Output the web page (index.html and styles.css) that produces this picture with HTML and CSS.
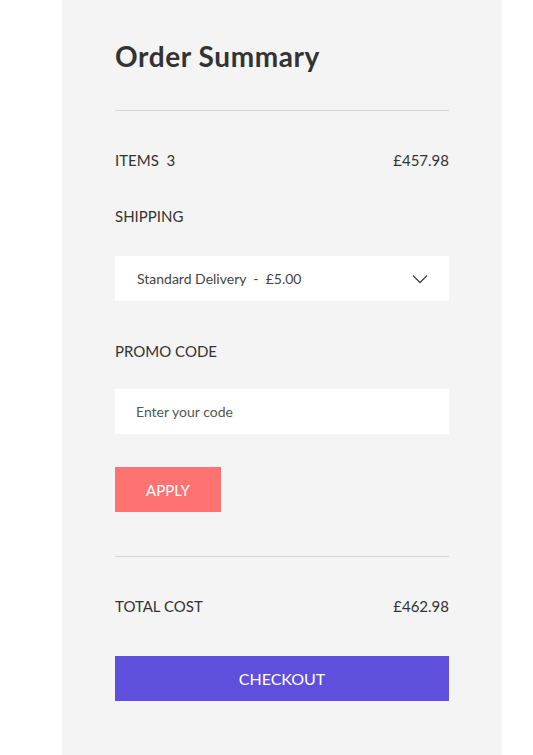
FILE: index.html
```html
<!DOCTYPE html>
<html>
<head>
<meta charset="utf-8">
<link rel="stylesheet" href="styles.css">
</head>
<body>
<div class="panel">
  <h1 class="title">Order Summary</h1>
  <div class="rule rule-top"></div>
  <div class="row items">
    <span>ITEMS&nbsp; 3</span>
    <span>£457.98</span>
  </div>
  <div class="label shipping">SHIPPING</div>
  <div class="select">
    <span>Standard Delivery&nbsp; -&nbsp; £5.00</span>
    <svg class="chev" width="16" height="10" viewBox="0 0 16 10"><path d="M1 1.5 L8 8.5 L15 1.5" fill="none" stroke="#444" stroke-width="1.3"/></svg>
  </div>
  <div class="label promo">PROMO CODE</div>
  <div class="input">Enter your code</div>
  <div class="apply">APPLY</div>
  <div class="rule rule-bottom"></div>
  <div class="row total">
    <span>TOTAL COST</span>
    <span>£462.98</span>
  </div>
  <div class="checkout">CHECKOUT</div>
</div>
</body>
</html>
```

FILE: styles.css
```css
html, body {
  margin: 0;
  padding: 0;
  background: #ffffff;
}
body {
  font-family: "Lato", "Open Sans", sans-serif;
  color: #333333;
}
.panel {
  margin-left: 62px;
  width: 440px;
  min-height: 755px;
  box-sizing: border-box;
  padding: 39px 53px 0 53px;
  background: #f4f4f4;
  display: flex;
  flex-direction: column;
}
.title {
  margin: 0;
  font-size: 28px;
  line-height: 34px;
  font-weight: 700;
  color: #333;
  letter-spacing: 0.6px;
}
.rule {
  height: 1px;
  background: #d6d6d6;
}
.rule-top { margin-top: 37px; }
.row {
  display: flex;
  justify-content: space-between;
  font-size: 15px;
  line-height: 20px;
  color: #333;
}
.items { margin-top: 39px; }
.label {
  font-size: 15px;
  line-height: 20px;
  color: #333;
}
.shipping { margin-top: 36px; }
.select {
  margin-top: 30px;
  height: 45px;
  background: #fff;
  display: flex;
  align-items: center;
  justify-content: space-between;
  padding: 0 21px 0 22px;
  font-size: 14px;
  color: #444;
}
.promo { margin-top: 40px; }
.input {
  margin-top: 28px;
  height: 45px;
  background: #fff;
  display: flex;
  align-items: center;
  padding: 0 21px;
  font-size: 14px;
  color: #555;
}
.apply {
  margin-top: 33px;
  width: 106px;
  height: 45px;
  background: #ff7272;
  color: #fff;
  font-size: 15px;
  display: flex;
  align-items: center;
  justify-content: center;
}
.rule-bottom { margin-top: 44px; }
.total { margin-top: 39px; }
.checkout {
  margin-top: 40px;
  height: 45px;
  background: #5e50dc;
  color: #fff;
  font-size: 16px;
  display: flex;
  align-items: center;
  justify-content: center;
}
```
